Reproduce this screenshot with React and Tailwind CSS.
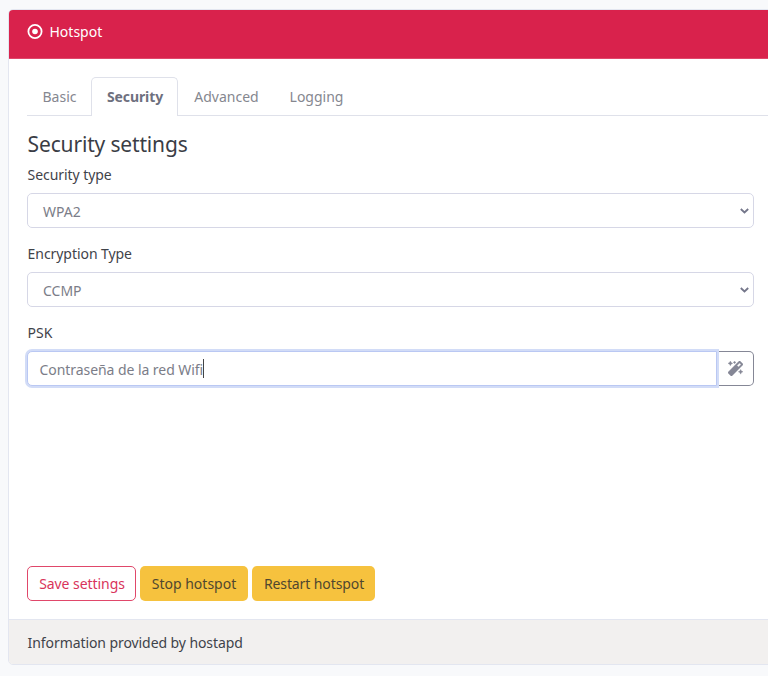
import { FaMagic } from "react-icons/fa";

function DotCircle() {
  return (
    <svg width="16" height="16" viewBox="0 0 16 16" fill="none">
      <circle cx="8" cy="7.5" r="6.6" stroke="white" strokeWidth="1.8" />
      <circle cx="8" cy="7.5" r="2.8" fill="white" />
    </svg>
  );
}

function Select({ value }) {
  return (
    <div className="flex h-[35px] w-[727px] items-center justify-between rounded-[5px] border border-[#d6d7e6] bg-white pr-[4px] pl-[15px] text-[#7b7d88]">
      <span className="pt-[2px] text-[14px]">{value}</span>
      <svg width="9" height="6" viewBox="0 0 9 6" fill="none" stroke="#74768a" strokeWidth="1.8">
        <path d="M.8 1 4.5 4.5 8.2 1" />
      </svg>
    </div>
  );
}

function Label({ children }) {
  return (
    <div className="flex h-[22px] items-center pb-[2px] pl-[0.6px] text-[14px] tracking-[-0.06px] text-[#3f434a]">
      {children}
    </div>
  );
}

export default function App() {
  return (
    <div className="h-[676px] w-[768px] overflow-hidden bg-[#f8f9fb] pt-[9px] pl-[8px] font-['Noto_Sans','Open_Sans',sans-serif] text-[14px] whitespace-nowrap">
      <div className="flex h-[656px] w-[790px] flex-col overflow-hidden rounded-[5px] border border-[#e3e6f0] bg-white">
        <header className="-mt-px flex h-[50px] shrink-0 items-center border-b border-[#e0476a] bg-[#d9224c] pb-[4px] pl-[18px] text-white">
          <DotCircle />
          <span className="ml-[6.5px]">Hotspot</span>
        </header>

        <main className="flex grow flex-col pt-[18px] pl-[18px]">
          <nav className="flex h-[39px] shrink-0 border-b border-[#dfe1ea] text-[14px] text-[#85878f]">
            <span className="flex w-[64px] items-center justify-center pl-px">Basic</span>
            <span className="flex h-[39px] w-[87px] items-center justify-center rounded-t-[5px] border border-b-0 border-[#dfe1ea] bg-white pb-[2px] pl-px font-bold tracking-[-0.1px] text-[#6e707e]">
              Security
            </span>
            <span className="flex w-[96px] items-center justify-center pl-px">Advanced</span>
            <span className="flex w-[84px] items-center justify-center pl-px">Logging</span>
          </nav>

          <h4 className="mt-[16px] flex h-[28px] items-center pb-[3px] pl-[0.6px] text-[21px] tracking-[-0.16px] text-[#3a3d45]">
            Security settings
          </h4>
          <div className="mt-[4px]">
            <Label>Security type</Label>
          </div>
          <div className="mt-[7px]">
            <Select value="WPA2" />
          </div>
          <div className="mt-[15px]">
            <Label>Encryption Type</Label>
          </div>
          <div className="mt-[7px]">
            <Select value="CCMP" />
          </div>
          <div className="mt-[15px]">
            <Label>PSK</Label>
          </div>
          <div className="mt-[7px] flex h-[35px] w-[727px]">
            <div className="z-10 flex w-[690px] items-center rounded-l-[5px] border border-[#bac8f3] bg-white pl-[11.5px] text-[#7b7d88] shadow-[0_0_0_2px_#d2dcf7]">
              <span className="pt-[2px] tracking-[-0.06px]">Contraseña de la red Wifi</span>
              <span className="h-[19px] w-px bg-[#444]" />
            </div>
            <div className="flex w-[37px] items-center justify-center rounded-r-[5px] border border-l-0 border-[#858796] text-[#858796]">
              <FaMagic size={15} stroke="currentColor" strokeWidth={12} />
            </div>
          </div>

          <div className="mt-[180px] flex h-[35px] gap-[4px]">
            <button className="flex w-[109px] items-center justify-center rounded-[5px] border border-[#e0476a] pl-px tracking-[-0.06px] text-[#d9345b]">
              Save settings
            </button>
            <button className="flex w-[108px] items-center justify-center rounded-[5px] bg-[#f6c23e] text-[#50472f]">
              Stop hotspot
            </button>
            <button className="flex w-[123px] items-center justify-center rounded-[5px] bg-[#f6c23e] pl-px tracking-[-0.1px] text-[#50472f]">
              Restart hotspot
            </button>
          </div>
        </main>

        <footer className="flex h-[45px] shrink-0 items-center border-t border-[#e3e6f0] bg-[#f2f0ef] pl-[18.6px] tracking-[-0.08px] text-[#3f434a]">
          Information provided by hostapd
        </footer>
      </div>
    </div>
  );
}
